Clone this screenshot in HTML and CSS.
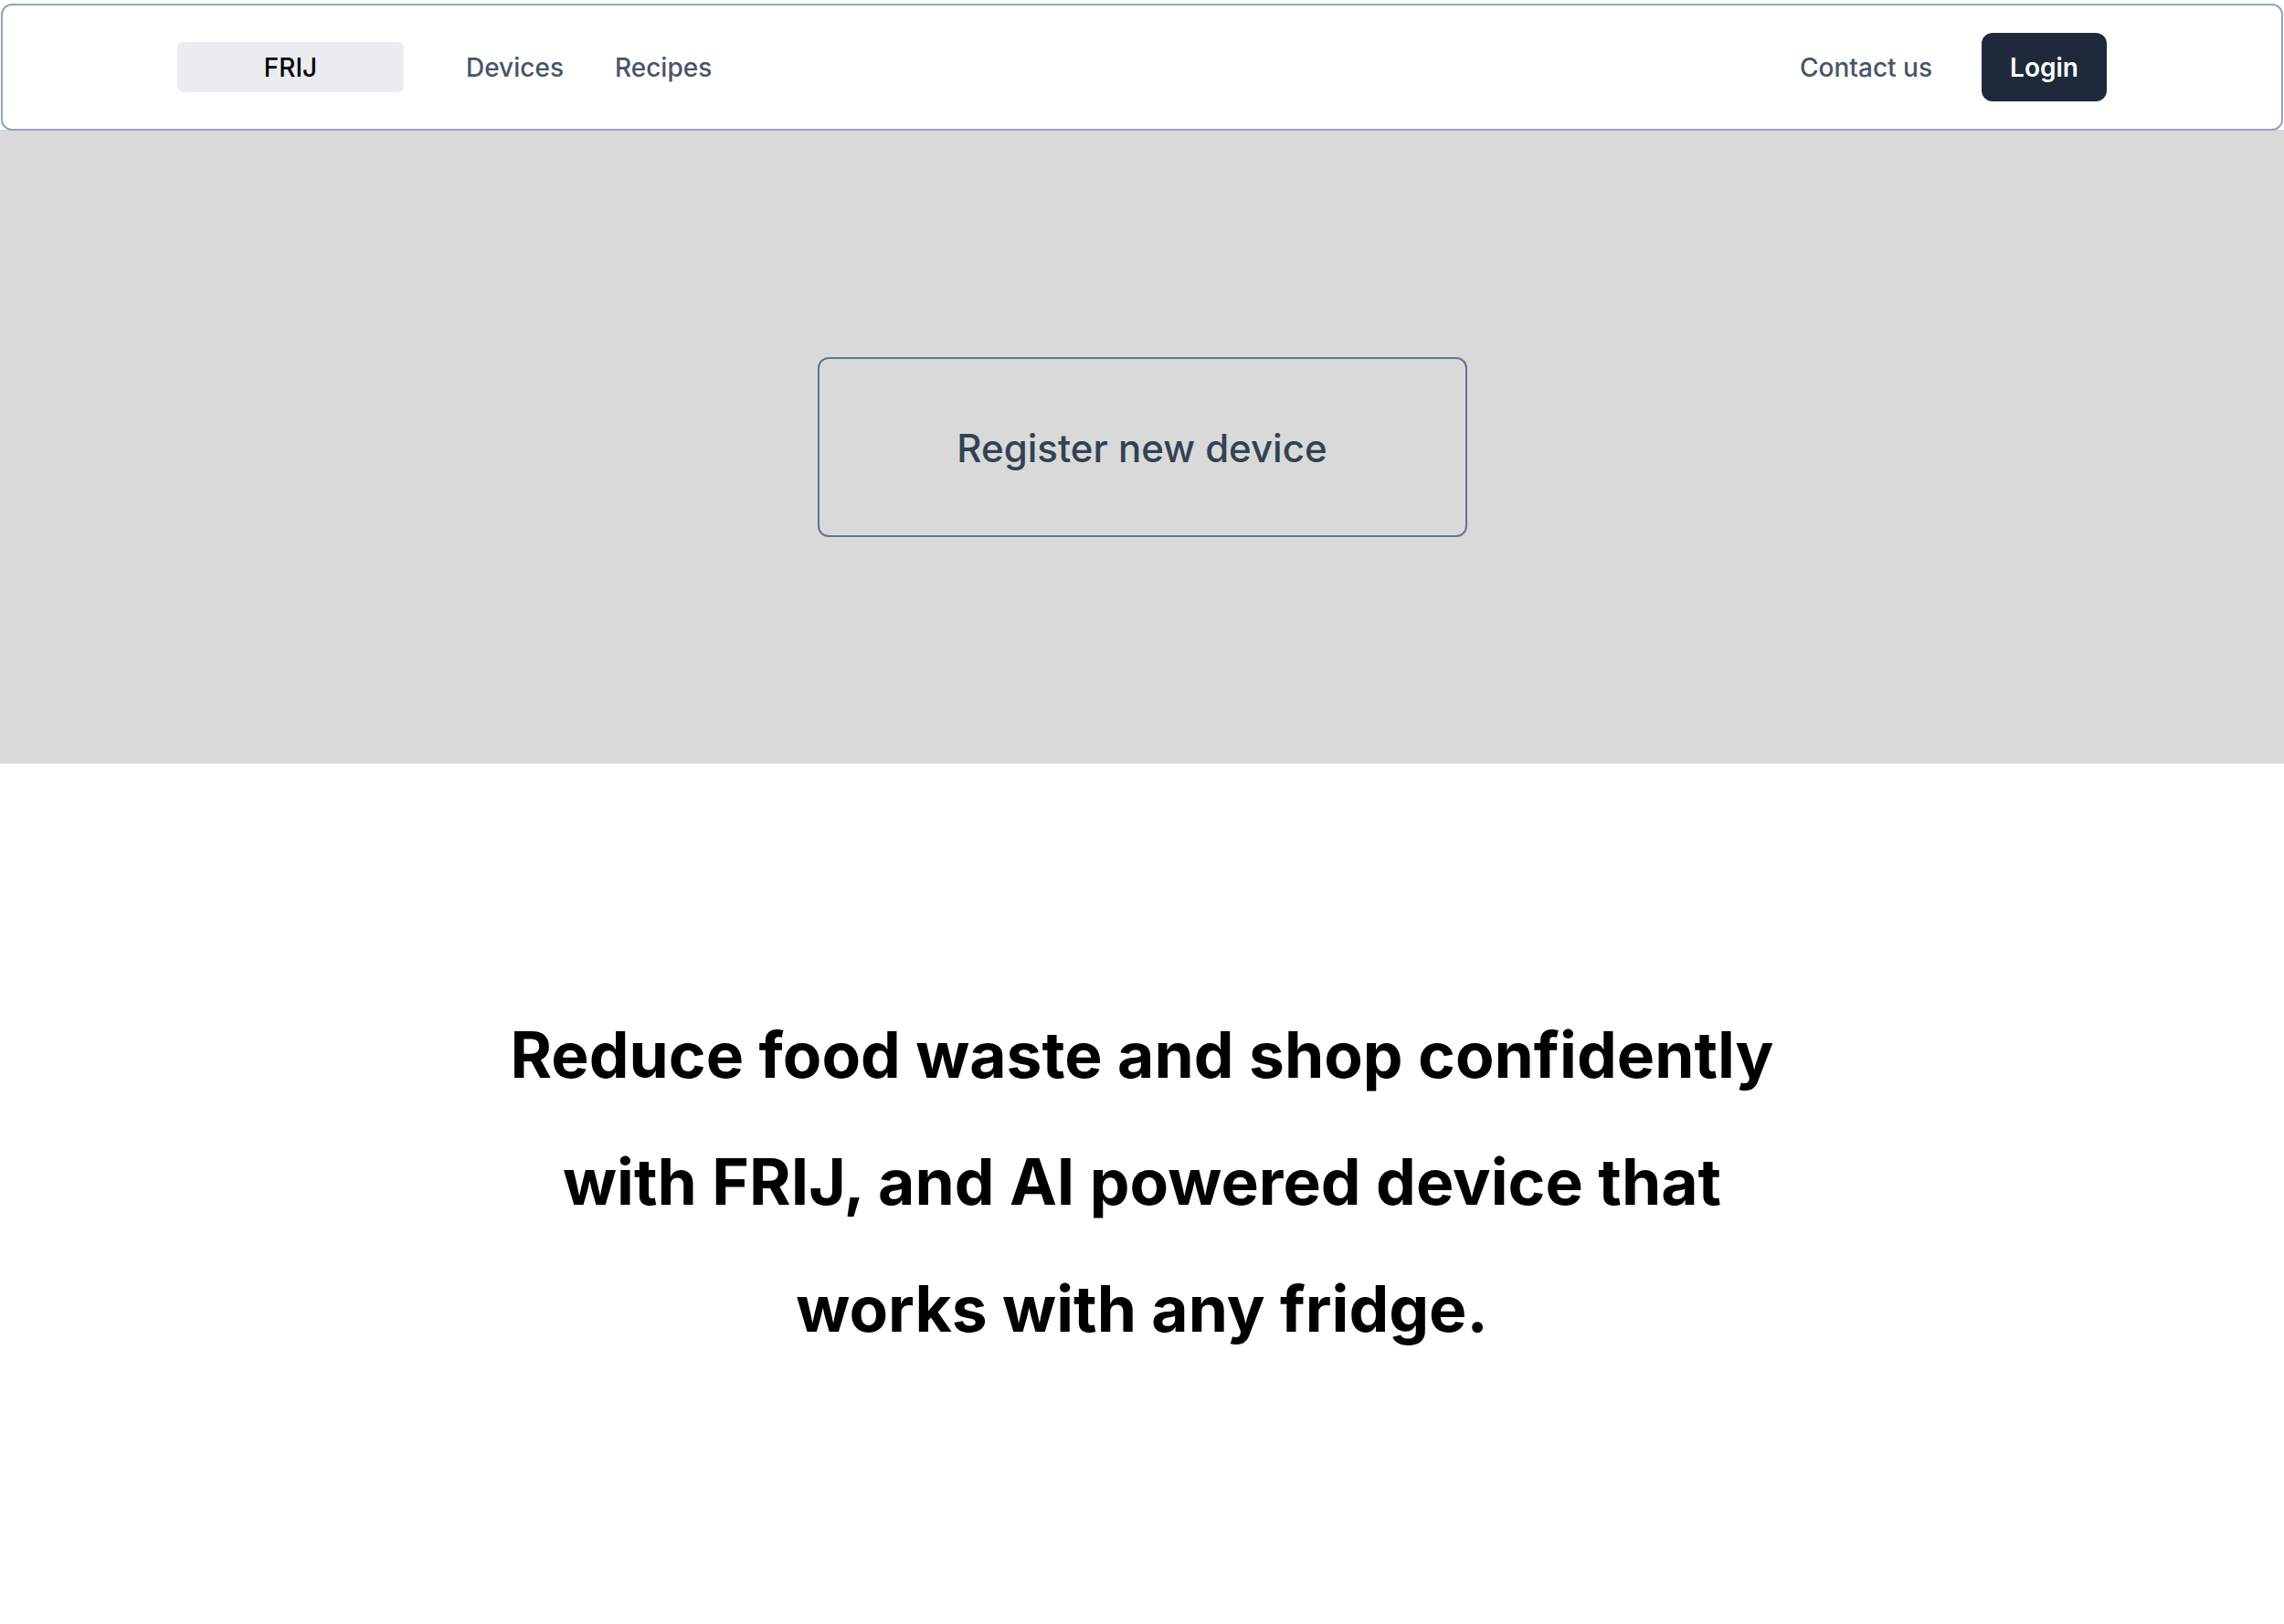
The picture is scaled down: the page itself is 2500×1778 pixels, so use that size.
FILE: index.html
```html
<!DOCTYPE html>
<html lang="en">
<head>
<meta charset="utf-8">
<title>FRIJ</title>
<link rel="stylesheet" href="styles.css">
</head>
<body>
<header class="nav">
  <div class="nav-left">
    <a class="brand">FRIJ</a>
    <a class="nav-link">Devices</a>
    <a class="nav-link">Recipes</a>
  </div>
  <div class="nav-right">
    <a class="nav-link">Contact us</a>
    <a class="login">Login</a>
  </div>
</header>
<section class="hero">
  <button class="register">Register new device</button>
</section>
<section class="tagline">
  <h1>Reduce food waste and shop confidently<br>with FRIJ, and AI powered device that<br>works with any fridge.</h1>
</section>
</body>
</html>
```
FILE: styles.css
```css
* { box-sizing: border-box; }
html, body { margin: 0; padding: 0; }
body {
  font-family: Inter, "Noto Sans", sans-serif;
  background: #ffffff;
  width: 2500px;
  min-height: 1778px;
}
.nav {
  margin: 4px 1px 0 1px;
  height: 139px;
  border: 2px solid #94a3b8;
  border-radius: 12px;
  background: #ffffff;
  display: flex;
  align-items: center;
  justify-content: space-between;
  padding: 0 191px;
  position: relative;
  z-index: 1;
}
.nav-left, .nav-right {
  display: flex;
  align-items: center;
}
.brand {
  width: 248px;
  height: 55px;
  background: #ebecf0;
  border-radius: 6px;
  display: flex;
  align-items: center;
  justify-content: center;
  font-size: 28px;
  font-weight: 500;
  color: #000;
  margin-right: 68px;
}
.nav-link {
  font-size: 28px;
  font-weight: 500;
  color: #475569;
}
.nav-left .nav-link + .nav-link { margin-left: 56px; }
.login {
  margin-left: 54px;
  width: 137px;
  height: 75px;
  background: #1e293b;
  color: #ffffff;
  border-radius: 12px;
  display: flex;
  align-items: center;
  justify-content: center;
  font-size: 28px;
  font-weight: 600;
}
.hero {
  margin-top: -1px;
  height: 694px;
  background: #d9d9d9;
  display: flex;
  align-items: center;
  justify-content: center;
}
.register {
  width: 711px;
  height: 197px;
  background: transparent;
  border: 2px solid #64748b;
  border-radius: 12px;
  font-family: Inter, "Noto Sans", sans-serif;
  font-size: 42px;
  font-weight: 500;
  color: #334155;
  padding-top: 4px;
}
.tagline {
  padding-top: 250px;
  display: flex;
  justify-content: center;
}
.tagline h1 {
  margin: 0;
  text-align: center;
  font-size: 69.5px;
  font-weight: 700;
  line-height: 139px;
  color: #000;
}
```
